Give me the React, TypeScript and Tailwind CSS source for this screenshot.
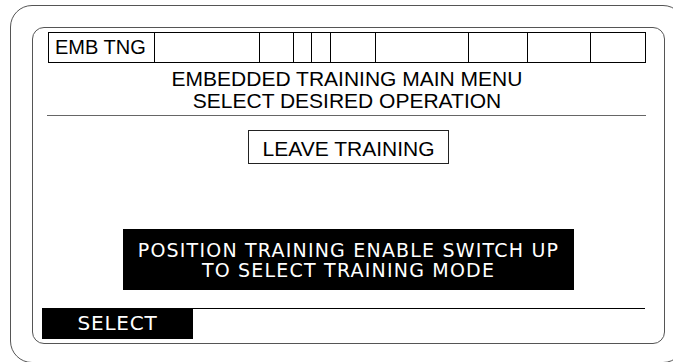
const cellWidths = [106, 105, 34, 18, 19, 45, 93, 59, 63, 54];

export default function App() {
  return (
    <div className="h-[362px] w-[673px] overflow-hidden bg-white">
      <div className="ml-[10px] mt-[5px] h-[358px] w-[675px] rounded-[22px] border border-[#555] pl-[21px] pt-[21px]">
        <div className="flex h-[317px] w-[633px] flex-col rounded-[12px] border border-[#555] font-['Liberation_Sans',Arial,sans-serif] text-black">
          {/* status row */}
          <div className="ml-[15px] mt-[4px] flex h-[31px] w-[598px] border border-black">
            {cellWidths.map((w, i) => (
              <div
                key={i}
                style={{ width: w }}
                className={
                  i < cellWidths.length - 1
                    ? "h-full shrink-0 border-r border-black"
                    : "h-full shrink-0"
                }
              >
                {i === 0 && (
                  <span className="block pl-[6px] text-[20px] leading-[29px]">
                    EMB TNG
                  </span>
                )}
              </div>
            ))}
          </div>

          <div className="ml-[15px] mt-[5px] w-[598px] text-center text-[21px] leading-[22px]">
            <p>EMBEDDED TRAINING MAIN MENU</p>
            <p>SELECT DESIRED OPERATION</p>
          </div>

          <div className="ml-[14px] mt-[3px] h-px w-[599px] bg-[#666]" />

          <div className="mx-auto mt-[14px] h-[34px] w-[201px] border border-[#222] pb-[3px] pt-[7px] text-center text-[21px] leading-[22px]">
            LEAVE TRAINING
          </div>

          <div className="mx-auto mt-[65px] flex h-[61px] w-[451px] flex-col items-center justify-center bg-black font-['DejaVu_Sans',sans-serif] text-[19px] leading-[20px] tracking-[1.2px] text-white">
            <p>POSITION TRAINING ENABLE SWITCH UP</p>
            <p>TO SELECT TRAINING MODE</p>
          </div>

          <div className="ml-[9px] mt-[18px] flex w-[603px]">
            <div className="h-[31px] w-[151px] bg-black text-center font-['DejaVu_Sans',sans-serif] text-[20px] leading-[31px] tracking-[0.8px] text-white">
              SELECT
            </div>
            <div className="flex-1 border-t border-black" />
          </div>
        </div>
      </div>
    </div>
  );
}
